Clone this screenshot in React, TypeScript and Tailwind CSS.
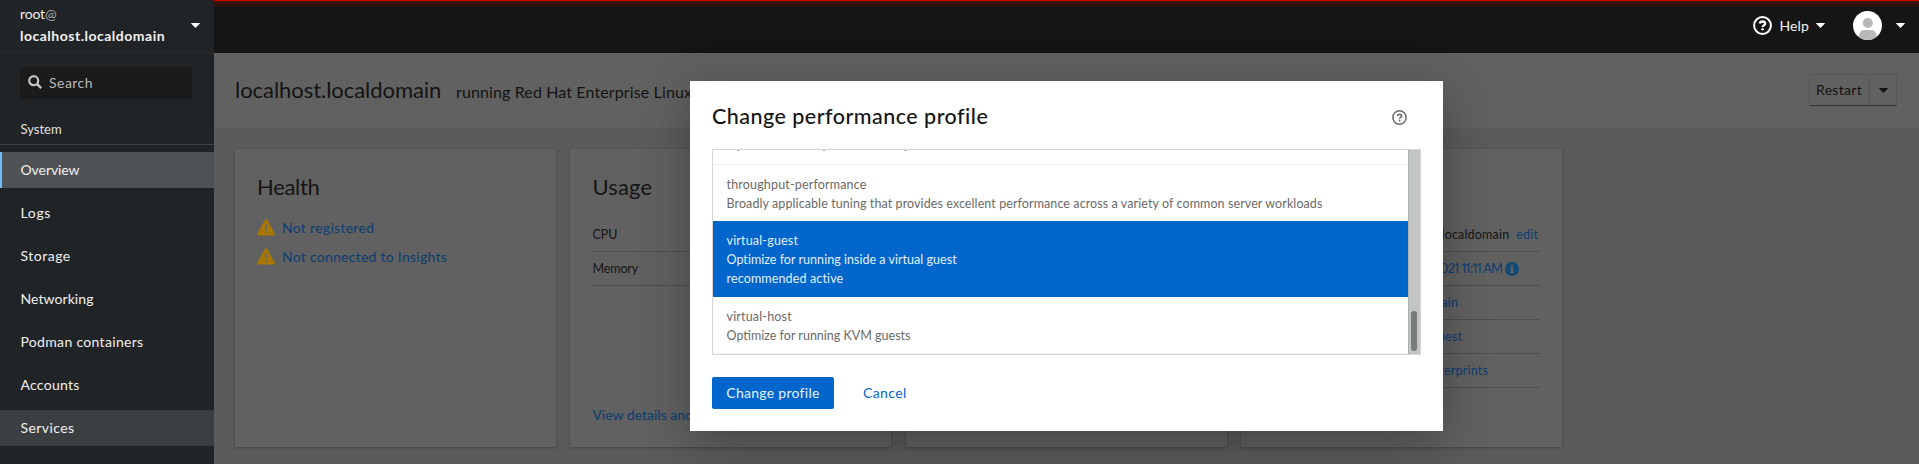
import React, { ReactNode } from 'react';

function Caret({ className = '' }: { className?: string }) {
  return (
    <svg className={className} width="9" height="5" viewBox="0 0 9 5" fill="currentColor">
      <path d="M.5 0h8q.6.2.2.7L5 4.5q-.5.4-1 0L.3.7Q-.1.2.5 0Z" />
    </svg>
  );
}

function HelpIcon({ size, stroke, mark }: { size: number; stroke: number; mark: number }) {
  return (
    <svg width={size} height={size} viewBox="0 0 20 20" fill="none" stroke="currentColor">
      <circle cx="10" cy="10" r={10 - stroke / 2 - 0.1} strokeWidth={stroke} />
      <path d="M7.1 7.9C7.5 6.4 8.6 5.8 10 5.8c1.6 0 2.8.9 2.8 2.2 0 1.9-2.6 1.8-2.6 3.6" strokeWidth={mark} />
      <circle cx="10.1" cy="14" r="1.35" fill="currentColor" stroke="none" />
    </svg>
  );
}

function WarningIcon() {
  return (
    <svg width="18" height="17" viewBox="0 0 18 17" className="shrink-0">
      <path
        fill="#a97600"
        d="M9 .3c.6 0 1 .3 1.3.8l7.3 13.5c.6 1.1 0 2-1.1 2H1.5c-1.1 0-1.7-.9-1.1-2L7.7 1.1C8 .6 8.4.3 9 .3Z"
      />
      <path fill="#6b6b6b" d="M8 5.500h2v5H8ZM8 12h2v2H8Z" />
    </svg>
  );
}

function InfoIcon() {
  return (
    <svg width="14" height="14" viewBox="0 0 14 14" className="-mt-px">
      <circle cx="7" cy="7" r="7" fill="#104b78" />
      <path d="M5.900 2.400h2.200v2H5.900ZM5 5.500h3.200v4.200H9v1.500H5V9.700h.9V7H5Z" fill="#616161" />
    </svg>
  );
}

const navItems = [
  { label: 'Overview', style: 'bg-[#4f5255] border-[#73bcf7] tracking-[-0.07px]' },
  { label: 'Logs', style: 'border-transparent tracking-[0.65px]' },
  { label: 'Storage', style: 'border-transparent tracking-[0.5px]' },
  { label: 'Networking', style: 'border-transparent tracking-[0.07px]' },
  { label: 'Podman containers', style: 'border-transparent tracking-[0.32px]' },
  { label: 'Accounts', style: 'border-transparent tracking-[0.26px]' },
  { label: 'Services', style: 'bg-[#3c3f42] border-[#3c3f42] tracking-[0.42px]' },
];

function Sidebar() {
  return (
    <aside className="flex h-full w-[214px] shrink-0 flex-col bg-[#212427] text-[#f0f0f0]">
      <div className="flex h-[53px] items-center justify-between border-b border-[#302a29] pr-[14px] pl-[20px]">
        <div className="pb-[3px] text-[14px] leading-[22px]">
          <div className="tracking-[-0.15px]">
            root<span className="text-[#a5a6a8]">@</span>
          </div>
          <div className="font-bold tracking-[0.5px]">localhost.localdomain</div>
        </div>
        <Caret className="-mt-0.5 text-white" />
      </div>
      <div className="mt-[14px] ml-[20px] flex h-[32px] w-[172px] items-center rounded-[2px] bg-[#1b1b1b] pl-2">
        <svg width="14" height="14" viewBox="0 0 14 14" fill="none" stroke="#c4c4c4" className="mb-0.5">
          <circle cx="5.700" cy="5.700" r="4.500" strokeWidth="2.200" />
          <path d="m9.200 9.200 4 4" strokeWidth="2.400" />
        </svg>
        <span className="ml-[7px] pb-px text-[14px] tracking-[0.47px] text-[#b8b8b8]">Search</span>
      </div>
      <div className="flex h-[46px] items-center border-b border-[#3f4245] pt-[16px] pl-[20.5px] text-[13px] text-[#e0e0e0]">
        System
      </div>
      <nav className="mt-[7px] flex flex-col gap-[7px] text-[14px]">
        {navItems.map((n) => (
          <a key={n.label} className={`flex h-[36px] items-center border-l-2 pb-[2px] pl-[18.5px] ${n.style}`}>
            {n.label}
          </a>
        ))}
      </nav>
    </aside>
  );
}

function Topbar() {
  return (
    <header className="h-[53px] shrink-0 bg-[#151515] text-white">
      <div className="h-px bg-[#c90000]" />
      <div className="h-[7px] bg-linear-to-b from-[#4a0e0e] to-[#151515]" />
      <div className="-mt-[8px] flex h-[51px] items-center justify-end pr-[14px]">
        <HelpIcon size={19} stroke={2.1} mark={2.5} />
        <span className="ml-[8px] pb-px text-[14px] tracking-[0.12px] text-[#f0f0f0]">Help</span>
        <Caret className="ml-[7px]" />
        <svg width="29" height="29" viewBox="0 0 29 29" className="mr-[14px] ml-[28px]">
          <defs>
            <clipPath id="avatar">
              <circle cx="14.500" cy="14.500" r="14.500" />
            </clipPath>
          </defs>
          <g clipPath="url(#avatar)">
            <rect width="29" height="29" fill="#fff" />
            <circle cx="14.800" cy="12" r="5" fill="#b8b8b8" />
            <path d="M6 29v-3c0-4.500 2-7 5.500-7h6.500c3.500 0 5.500 2.500 5.500 7v3Z" fill="#b8b8b8" />
          </g>
        </svg>
        <Caret />
      </div>
    </header>
  );
}

function Card({ title, track, children }: { title: string; track: string; children?: ReactNode }) {
  return (
    <section className="flex h-[298px] w-[321px] flex-col bg-[#616161] px-[22px] pt-[22px] pb-[22px] shadow-[0_1px_3px_rgba(0,0,0,0.25)]">
      <h2 className={`h-[32px] text-[22px] leading-[32px] text-[#151515] ${track}`}>{title}</h2>
      {children}
    </section>
  );
}

const ROW = 'flex h-[34px] items-center border-b border-[#4e4e4e] pt-[2px] text-[12.5px] whitespace-nowrap';

function Overview() {
  return (
    <main className="flex min-w-0 flex-1 flex-col bg-[#5b5b5b]">
      <Topbar />
      <div className="flex h-[75px] shrink-0 items-center bg-[#616161] pr-[22px] pl-[21px] text-[#131313]">
        <h1 className="w-[221px] pb-[2px] text-[22px] tracking-[-0.05px] whitespace-nowrap">localhost.localdomain</h1>
        <p className="mt-[3px] text-[16px] tracking-[0.12px]">running Red Hat Enterprise Linux</p>
        <div className="-mt-px ml-auto flex h-[32px] w-[88px] border border-[#575757] border-b-[#303030]">
          <span className="flex w-[60px] items-center border-r border-[#575757] pb-px pl-[6px] text-[14px] tracking-[0.31px]">
            Restart
          </span>
          <span className="flex flex-1 items-center justify-center">
            <Caret />
          </span>
        </div>
      </div>
      <div className="flex gap-[14.4px] pt-[21px] pl-[21px]">
        <Card title="Health" track="tracking-[-0.3px]">
          <ul className="mt-[10px] text-[14px] text-[#0c3d72]">
            <li className="flex h-[29px] items-center gap-[7px] tracking-[0.29px]">
              <WarningIcon />
              Not registered
            </li>
            <li className="flex h-[29px] items-center gap-[7px] tracking-[0.26px]">
              <WarningIcon />
              Not connected to Insights
            </li>
          </ul>
        </Card>
        <Card title="Usage" track="tracking-[0.2px]">
          <div className="mt-[15px] text-[#151515]">
            <div className={ROW}>CPU</div>
            <div className={`${ROW} tracking-[-0.1px]`}>Memory</div>
          </div>
          <a className="mt-auto text-[14px] leading-[21px] text-[#0c3d72]">View details and history</a>
        </Card>
        <Card title="System" track="" />
        <Card title="Info" track="">
          <div className="mt-[15px] text-[#0c3d72]">
            <div className={`${ROW} text-[#151515]`}>
              <span className="w-[98px]">Hostname</span>
              <span className="flex flex-1 justify-end pr-[2px] tracking-[0.19px]">
                localhost.localdomain<span className="ml-[7px] text-[#0c3d72]">edit</span>
              </span>
            </div>
            <div className={ROW}>
              <span className="w-[98px] text-[#151515]">System time</span>
              <span className="flex flex-1 items-center justify-end gap-[3px] pr-[21px] tracking-[-0.6px] proportional-nums">
                May 18, 2021 11:11 AM <InfoIcon />
              </span>
            </div>
            <div className={ROW}>
              <span className="w-[98px] text-[#151515]">Domain</span>
              <span className="flex-1 pr-[82px] text-right tracking-[0.2px]">Join Domain</span>
            </div>
            <div className={ROW}>
              <span className="w-[98px] text-[#151515]">Profile</span>
              <span className="flex-1 pr-[78px] text-right tracking-[0.2px]">virtual-guest</span>
            </div>
            <div className={ROW}>
              <span className="w-[68px] text-[#151515]">Keys</span>
              <span className="flex-1 pr-[52px] text-right tracking-[0.2px]">Show fingerprints</span>
            </div>
          </div>
        </Card>
      </div>
    </main>
  );
}

function ProfileDialog() {
  return (
    <div
      role="dialog"
      className="absolute top-[81px] left-[690px] flex h-[350px] w-[753px] flex-col bg-white px-[22px] shadow-[0_12px_45px_rgba(0,0,0,0.3)]"
    >
      <div className="flex h-[68px] shrink-0 items-center justify-between pt-[4px] pr-[14px] text-[#151515]">
        <h2 className="pb-[2px] text-[21.5px] font-medium tracking-[0.47px]">Change performance profile</h2>
        <span className="pt-px text-[#6a6e73]">
          <HelpIcon size={15} stroke={2} mark={2.2} />
        </span>
      </div>
      <div className="flex h-[206px] w-[709px] shrink-0 border border-[#d6d6d6]">
        <div className="flex min-w-0 flex-1 flex-col justify-end overflow-hidden text-[12.5px] leading-[19px] whitespace-nowrap text-[#6a6a6a]">
          <div className="shrink-0 border-b border-[#f0f0f0] px-[14px] pb-[10px]">
            <p className="tracking-[0.07px]">Optimize for low power consumption</p>
          </div>
          <div className="h-[56px] shrink-0 px-[13.5px] pt-[10px]">
            <p className="tracking-[0.17px]">throughput-performance</p>
            <p className="tracking-[0.09px]">
              Broadly applicable tuning that provides excellent performance across a variety of common server workloads
            </p>
          </div>
          <div className="h-[76px] shrink-0 bg-[#0066cc] px-[13.5px] pt-[10px] text-[#e4effa]">
            <p className="tracking-[0.18px]">virtual-guest</p>
            <p className="tracking-[0.03px]">Optimize for running inside a virtual guest</p>
            <p className="tracking-[0.14px]">recommended active</p>
          </div>
          <div className="h-[57px] shrink-0 border-b border-[#f0f0f0] px-[13.5px] pt-[10px]">
            <p className="tracking-[0.18px]">virtual-host</p>
            <p>Optimize for running KVM guests</p>
          </div>
        </div>
        <div className="flex w-[12px] shrink-0 flex-col justify-end border-l border-[#adafae] bg-[#c3c5c4] pb-[3px] pl-[2px]">
          <div className="h-[40px] w-[6px] rounded-full bg-[#777b7b]" />
        </div>
      </div>
      <div className="mt-[22px] flex h-[32px] items-center text-[14px]">
        <button className="h-[32px] w-[122px] rounded-[2px] bg-[#0066cc] pb-[2px] tracking-[0.27px] text-[#e8f2fb]">
          Change profile
        </button>
        <button className="ml-[29px] pb-[2px] tracking-[0.4px] text-[#0066cc]">Cancel</button>
      </div>
    </div>
  );
}

export default function App() {
  return (
    <div className="relative flex h-[464px] w-[1919px] overflow-hidden font-['Lato','Open_Sans',sans-serif]">
      <Sidebar />
      <Overview />
      <ProfileDialog />
    </div>
  );
}
